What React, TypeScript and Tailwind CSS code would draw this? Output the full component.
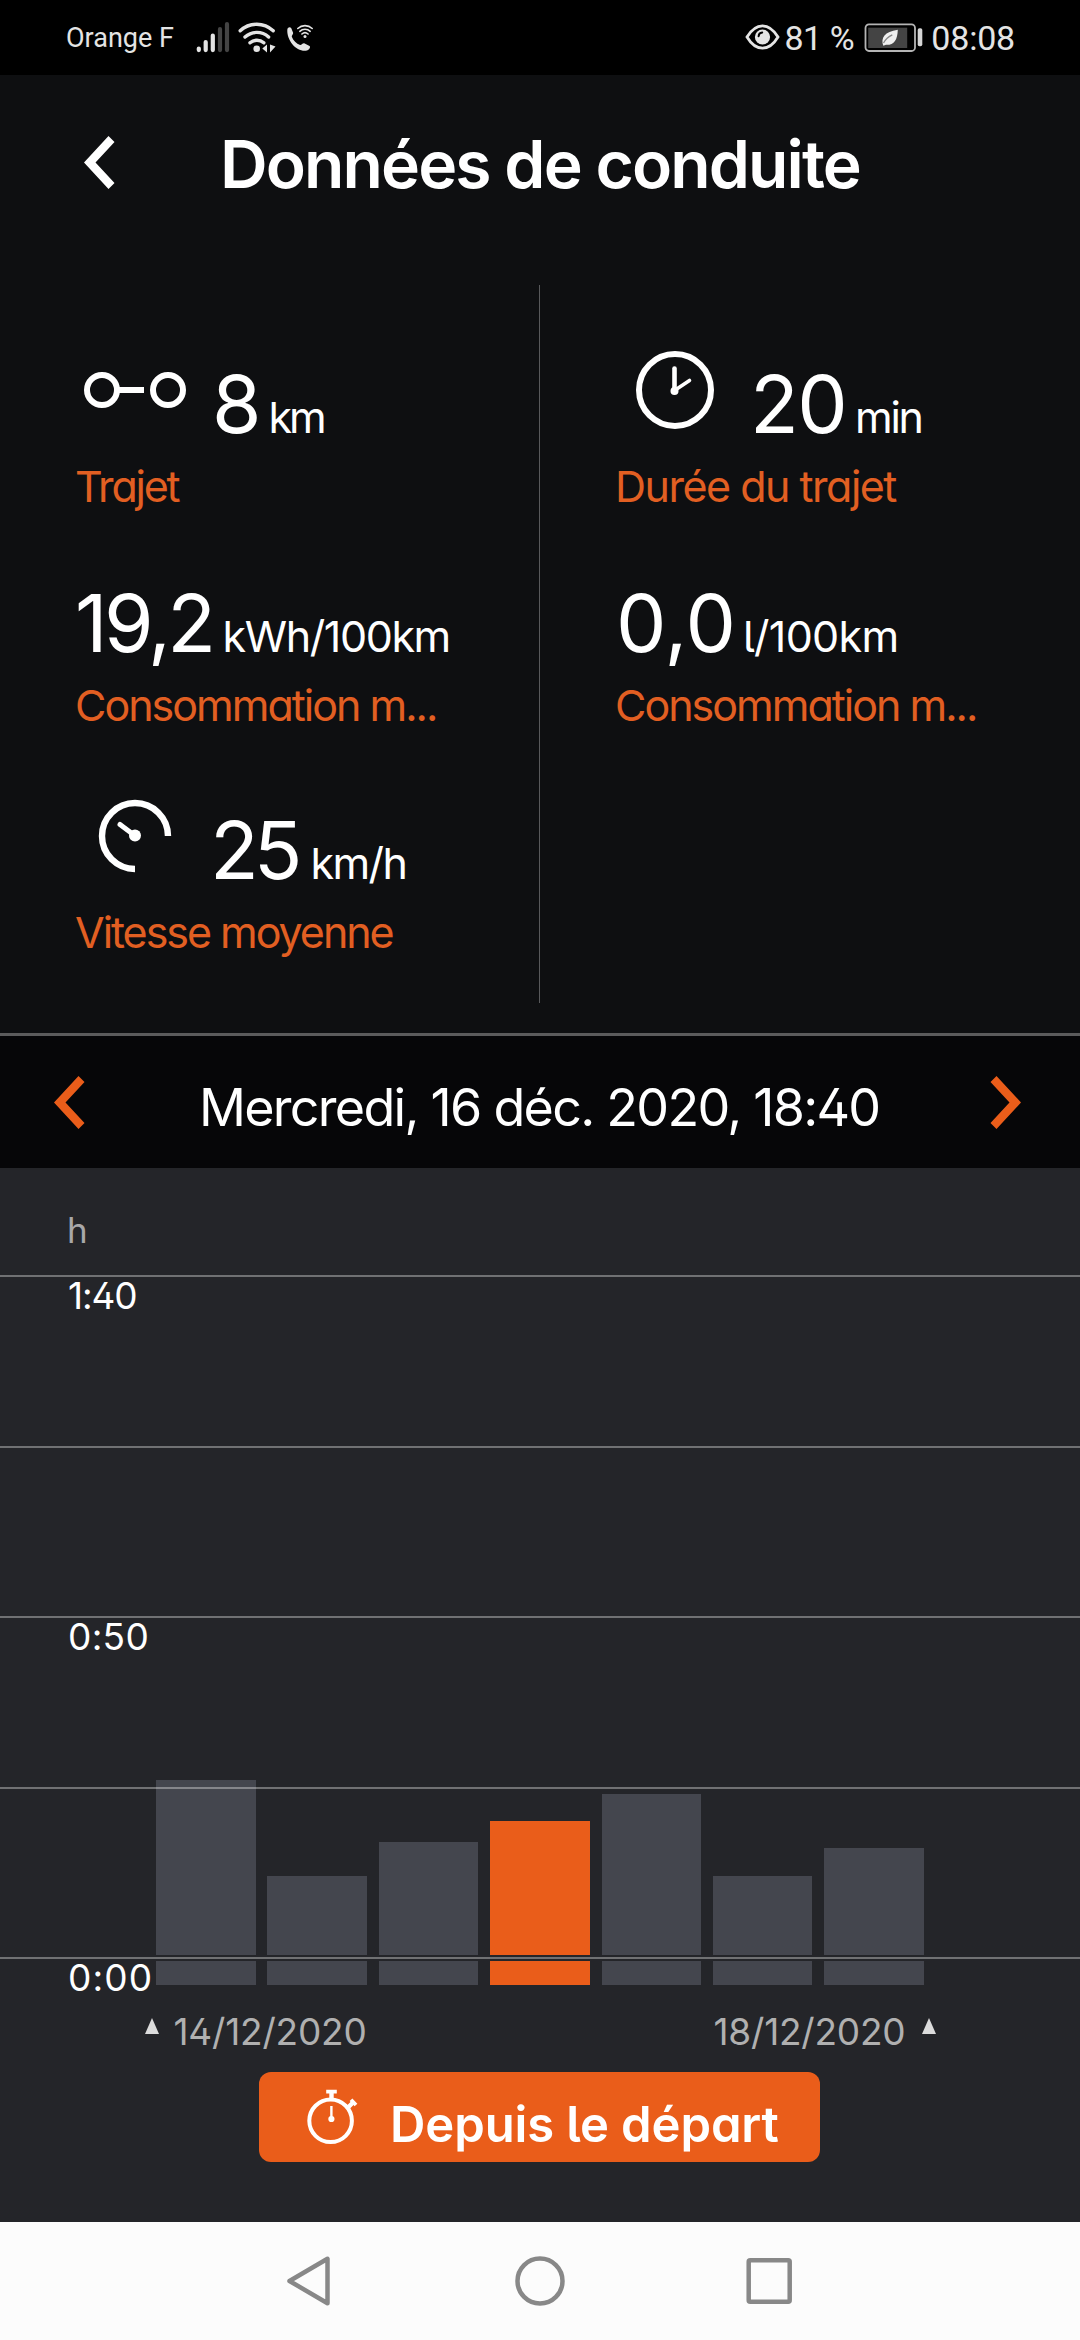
import type { ReactNode } from "react";

const trips = [
  { height: 175 },
  { height: 79 },
  { height: 113 },
  { height: 134, active: true },
  { height: 161 },
  { height: 79 },
  { height: 107 },
];

const gridRows = [
  { label: "1:40", className: "tracking-[-1.1px]" },
  { label: "" },
  { label: "0:50", className: "tracking-[0.3px]" },
  { label: "" },
  { label: "0:00", className: "tracking-[1.1px]" },
];

function Chevron({ className }: { className?: string }) {
  return (
    <svg className={className} width="31" height="53" viewBox="0 0 31 53" fill="currentColor">
      <path d="M0 26.5 24.5 0l6 6-19 20.5 19 20.5-6 6z" />
    </svg>
  );
}

function SignalIcon() {
  return (
    <svg className="ml-[22px]" width="34" height="31" viewBox="0 0 34 31" stroke="currentColor" strokeWidth="4.2" strokeLinecap="round">
      <path d="M2.8 26.5v1.6M9.7 20v8.100M16.8 13.500v14.600" />
      <path d="M24 7.200v20.900M31 2.200v25.900" stroke="#444" />
    </svg>
  );
}

function WifiIcon() {
  return (
    <svg className="ml-2" width="38" height="31" viewBox="0 0 38 31" fill="none" stroke="currentColor" strokeWidth="3.4" strokeLinecap="round">
      <path d="M2.200 8.800a24 24 0 0 1 33 0M7 15a17.500 17.500 0 0 1 23.600 0M12 20.800a10.500 10.500 0 0 1 13.800 0" />
      <circle cx="18.7" cy="26.7" r="3.3" fill="currentColor" stroke="none" />
      <path d="M24.300 26.500l4.700-4v8zM32 22.500v8l5.500-6z" fill="currentColor" stroke="none" />
    </svg>
  );
}

function WifiCallIcon() {
  return (
    <svg className="ml-2.5" width="28" height="31" viewBox="0 0 28 31" fill="none" stroke="currentColor" strokeWidth="1.6" strokeLinecap="round">
      <path
        d="M1.300 8C1.300 5.300 4 4.500 5.300 6.200l1.800 4.600c.4 1.600-1.600 2.400-1.300 3.900 1.400 3.900 4.600 7 8.300 8.200 1.600.2 2.500-2 4.100-1.700l5.300 2.700c1.600 1-.6 4-2.600 4.700C11 30.500.8 19 1.300 8z"
        fill="currentColor"
        stroke="none"
      />
      <path d="M11.800 6.500a10.500 10.500 0 0 1 14.400 0M13.800 9.300a7.500 7.500 0 0 1 10.400 0M15.900 12a4.600 4.600 0 0 1 6.200 0" />
      <circle cx="19" cy="14.4" r="1.5" fill="currentColor" stroke="none" />
    </svg>
  );
}

function EyeIcon() {
  return (
    <svg className="ml-auto" width="35" height="31" viewBox="0 0 35 31" fill="none">
      <path d="M2 15C6.500 7.500 11.500 3.800 17.500 3.800S28.500 7.500 33 15c-4.500 7.500-9.500 11.200-15.500 11.200S6.500 22.500 2 15z" stroke="currentColor" strokeWidth="2.8" />
      <circle cx="17.5" cy="15" r="7.6" fill="currentColor" />
      <path d="M13.600 14.200a4 4 0 0 1 3.600-3.700" stroke="#000" strokeWidth="2" strokeLinecap="round" />
    </svg>
  );
}

function BatteryIcon() {
  return (
    <svg className="ml-2.5" width="59" height="31" viewBox="0 0 59 31">
      <rect x="1.5" y="2.4" width="49.5" height="26.6" rx="3.5" fill="none" stroke="#b5b5b5" strokeWidth="1.8" />
      <rect x="4.2" y="5.7" width="39" height="20.3" fill="#444" />
      <path d="M33.800 7.700C33.500 18 30 23.200 22 22.800l-2.700.9C16.500 16 20.500 9.500 33.800 7.700z" fill="#f0f0f0" />
      <path d="M19.500 21c2-3.800 4.800-6.400 8.800-8.200" fill="none" stroke="#888" strokeWidth="1.3" />
      <rect x="53.7" y="6.3" width="4.6" height="18" rx="1.8" fill="#d5d5d5" />
    </svg>
  );
}

function TripIcon() {
  return (
    <svg className="mt-[-14px] shrink-0" width="118" height="80" viewBox="0 0 118 80" fill="none" stroke="currentColor" strokeWidth="6">
      <circle cx="27" cy="40" r="15" />
      <circle cx="93" cy="40" r="15" />
      <path d="M44 40h25" />
    </svg>
  );
}

function ClockIcon() {
  return (
    <svg className="mt-[-14px] shrink-0" width="118" height="80" viewBox="0 0 118 80" fill="none" stroke="currentColor">
      <circle cx="59" cy="40" r="36" strokeWidth="6" />
      <circle cx="58.5" cy="41" r="4" fill="currentColor" stroke="none" />
      <path d="M58.500 18.500v22" strokeWidth="4.6" strokeLinecap="round" />
      <path d="M58.500 40.500l15-10" strokeWidth="3.6" strokeLinecap="round" />
    </svg>
  );
}

function SpeedIcon() {
  return (
    <svg className="mt-[-14px] shrink-0" width="118" height="80" viewBox="0 0 118 80" fill="none" stroke="currentColor">
      <path d="M93 40A33 33 0 1 0 60 73" strokeWidth="6.4" />
      <circle cx="60" cy="39.5" r="6" fill="currentColor" stroke="none" />
      <path d="M45 28.500l14 10.500" strokeWidth="5" strokeLinecap="round" />
    </svg>
  );
}

function StopwatchIcon() {
  return (
    <svg width="52" height="56" viewBox="0 0 52 56" fill="none" stroke="currentColor">
      <circle cx="23.6" cy="31.8" r="21.3" strokeWidth="4" />
      <path d="M19.200 2.700h10.600M44 10.800l5 5.200" strokeWidth="3.8" />
      <path d="M24.500 3v7M46 13.500l-6 6" strokeWidth="4.4" />
      <path d="M24.400 17v12" strokeWidth="2.4" />
      <circle cx="24.4" cy="30" r="3.1" fill="currentColor" stroke="none" />
    </svg>
  );
}

type StatProps = {
  icon?: ReactNode;
  value: string;
  unit: string;
  label: string;
  className?: string;
  valueClass?: string;
  unitClass?: string;
  labelClass?: string;
};

function Stat({ icon, value, unit, label, className = "", valueClass = "", unitClass = "", labelClass = "" }: StatProps) {
  return (
    <div className={className}>
      <div className="flex h-20">
        {icon && <div className="mr-4">{icon}</div>}
        <p className="flex items-baseline whitespace-nowrap">
          <span className={`text-[80px] leading-[80px] ${valueClass}`}>{value}</span>
          <span className={`text-[43px] leading-[44px] ${unitClass}`}>{unit}</span>
        </p>
      </div>
      <p className={`mt-5 w-max text-[43px] leading-[44px] text-[#e25f22] ${labelClass}`}>{label}</p>
    </div>
  );
}

export default function App() {
  return (
    <div className="flex h-[2340px] w-[1080px] flex-col bg-[#0e0f11] font-[Inter,sans-serif] text-white [font-feature-settings:'cv02','cv05','cv11']">
      <div className="flex h-[75px] items-center bg-black pr-[65px] pl-[66px] font-[Roboto,sans-serif] text-[#e4e4e4]">
        <span className="pt-0.5 text-[27px]">Orange F</span>
        <SignalIcon />
        <WifiIcon />
        <WifiCallIcon />
        <EyeIcon />
        <span className="ml-1 pt-0.5 text-[34px] tracking-[-0.4px]">81 %</span>
        <BatteryIcon />
        <span className="ml-2 pt-0.5 text-[34px] tracking-[-0.2px]">08:08</span>
      </div>

      <header className="flex h-[178px] items-center pl-[84px]">
        <Chevron className="mt-[-3px]" />
        <h1 className="ml-[105px] text-[66px] font-semibold tracking-[-1.9px]">Données de conduite</h1>
      </header>

      <section className="flex h-[780px] pt-8 pb-[30px]">
        <div className="w-[540px] border-r border-[#58595b] pt-[79px] pl-[75px]">
          <Stat icon={<TripIcon />} value="8" unit="km" label="Trajet" valueClass="pl-[3px]" unitClass="ml-[7px] tracking-[-3px]" labelClass="tracking-[-2.2px]" />
          <Stat className="mt-[75px]" value="19,2" unit="kWh/100km" label="Consommation m..." valueClass="tracking-[-3.6px]" unitClass="ml-[10px] tracking-[-1.4px]" labelClass="tracking-[-2px]" />
          <Stat className="mt-[83px]" icon={<SpeedIcon />} value="25" unit="km/h" label="Vitesse moyenne" valueClass="pl-px tracking-[-5px]" unitClass="ml-[13px] tracking-[-1.6px]" labelClass="tracking-[-2.04px]" />
        </div>
        <div className="pt-[79px] pl-[76px]">
          <Stat icon={<ClockIcon />} value="20" unit="min" label="Durée du trajet" valueClass="tracking-[-1.6px]" unitClass="ml-[9px] tracking-[-2.3px]" labelClass="ml-[-1px] tracking-[-1.5px]" />
          <Stat className="mt-[75px]" value="0,0" unit="l/100km" label="Consommation m..." unitClass="ml-[7px] tracking-[-0.7px]" labelClass="ml-[-1px] tracking-[-2px]" />
        </div>
      </section>

      <nav className="flex h-[135px] items-center border-t-[3px] border-[#5b5b5c] bg-[#060608] pr-[59px] pl-[54px] text-[#ea5d1a]">
        <Chevron />
        <p className="ml-[114px] pt-[11px] text-[52px] tracking-[-1.72px] whitespace-nowrap text-white">Mercredi, 16 déc. 2020, 18:40</p>
        <Chevron className="ml-auto rotate-180" />
      </nav>

      <section className="relative h-[1054px] bg-[#242529]">
        {/* bars sit under the grid lines */}
        <div className="absolute bottom-[237px] left-[156px] flex items-end gap-[11.9px]">
          {trips.map((trip, i) => (
            <div key={i} className={`w-[99.5px] ${trip.active ? "text-[#ea5d1a]" : "text-[#44464e]"}`}>
              <div className="bg-current" style={{ height: trip.height }} />
              <div className="mt-1.5 h-6 bg-current" />
            </div>
          ))}
        </div>
        <p className="relative h-[107px] pt-[43px] pl-[67px] text-[35px] leading-[38px] text-[#a8a8a9]">h</p>
        {gridRows.map((row, i) => (
          <div
            key={i}
            className={`relative border-t-2 border-white/35 pt-px pl-[68px] text-[37px] leading-9 ${i === 4 ? "h-[57px]" : "h-[170.5px]"}`}
          >
            <span className={row.className}>{row.label}</span>
          </div>
        ))}

        <div className="relative flex items-start justify-between px-[144.5px] text-[37px] leading-9 tracking-[-0.2px] text-[#b0b0b0]">
          <div className="flex">
            <svg className="mt-1" width="14" height="16" viewBox="0 0 14 16" fill="#dcdcdc">
              <path d="M7 0l7 16H0z" />
            </svg>
            <span className="ml-[15px]">14/12/2020</span>
          </div>
          <div className="flex">
            <span className="mr-4">18/12/2020</span>
            <svg className="mt-1" width="14" height="16" viewBox="0 0 14 16" fill="#dcdcdc">
              <path d="M7 0l7 16H0z" />
            </svg>
          </div>
        </div>

        <button className="relative mt-[22px] ml-[259px] flex h-[90px] w-[561px] items-center rounded-xl bg-[#ea5d1a] pl-12">
          <StopwatchIcon />
          <span className="ml-[31px] pt-4 text-[49px] leading-[60px] font-semibold tracking-[-0.1px] whitespace-nowrap">Depuis le départ</span>
        </button>
      </section>

      <footer className="flex h-[118px] items-center bg-[#fcfcfc] pl-[286px]">
        <svg width="46" height="50" viewBox="0 0 46 50" fill="none" stroke="#888" strokeWidth="4.5" strokeLinejoin="round">
          <path d="M41.500 2.800v44.400L3.500 25z" />
        </svg>
        <svg className="ml-[183px]" width="50" height="50" viewBox="0 0 50 50" fill="none" stroke="#888" strokeWidth="4.5">
          <circle cx="25" cy="25" r="22.5" />
        </svg>
        <svg className="ml-[181px]" width="46" height="50" viewBox="0 0 46 50" fill="none" stroke="#888" strokeWidth="4.5">
          <rect x="2.7" y="4.3" width="41" height="41.4" rx="1.5" />
        </svg>
      </footer>
    </div>
  );
}
